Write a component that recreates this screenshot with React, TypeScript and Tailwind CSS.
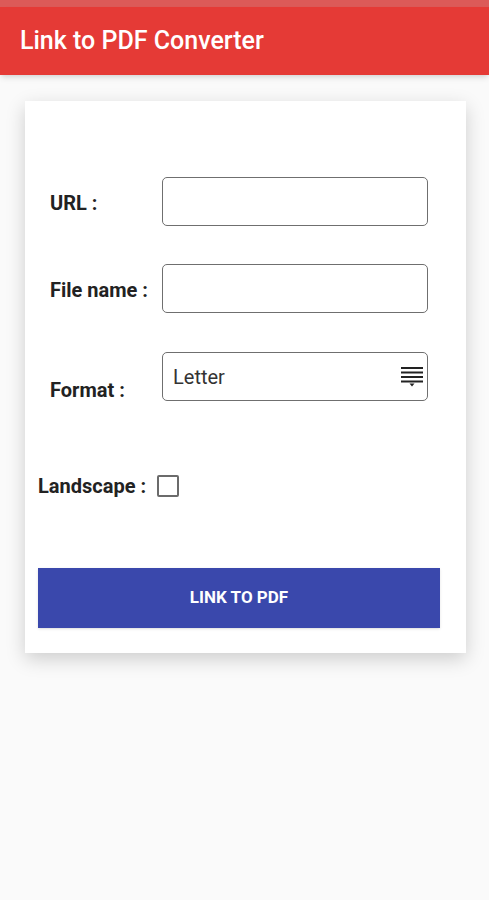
import { useState } from "react";

const font = { fontFamily: "Roboto, 'Noto Sans', sans-serif" };

function SelectIcon() {
  return (
    <svg width="24" height="22" viewBox="0 0 24 22" className="shrink-0">
      <rect x="1" y="1" width="22" height="2" fill="#222" />
      <rect x="1" y="5.5" width="22" height="2" fill="#222" />
      <rect x="1" y="10" width="22" height="2" fill="#222" />
      <rect x="1" y="14.5" width="22" height="2" fill="#222" />
      <path d="M9.5 17.5 L14.5 17.5 L12 20.5 Z" fill="#222" />
    </svg>
  );
}

function Field({ label }: { label: string }) {
  return (
    <div className="flex items-center pl-[12px] pr-[25px]">
      <span className="mt-[2px] w-[112px] shrink-0 text-[20px] font-bold text-[#222]">{label}</span>
      <input
        className="h-[49px] w-0 min-w-0 flex-1 rounded-[5px] border-[1.5px] border-[#6f6f6f] bg-white px-2 text-[20px] focus:outline-none"
        style={font}
      />
    </div>
  );
}

export default function App() {
  const [landscape, setLandscape] = useState(false);

  return (
    <div className="min-h-[900px] bg-[#fafafa]" style={font}>
      <div className="h-[7px] bg-[#dc5a58]" />
      <header className="flex h-[68px] items-center bg-[#e53a36] px-5 shadow-md">
        <h1 className="text-[25px] font-medium text-white">Link to PDF Converter</h1>
      </header>

      <div className="pl-[25px] pr-[23px] pt-[26px]">
        <div className="flex h-[552px] flex-col bg-white px-[13px] pt-[76px] shadow-[0_6px_18px_rgba(0,0,0,0.18)]">
          <Field label="URL :" />
          <div className="h-[38px]" />
          <Field label="File name :" />
          <div className="h-[39px]" />

          <div className="flex items-end pl-[12px] pr-[25px]">
            <span className="mb-[-4px] w-[112px] shrink-0 text-[20px] font-bold text-[#222]">Format :</span>
            <div className="flex h-[49px] min-w-0 flex-1 items-center justify-between rounded-[5px] border-[1.5px] border-[#6f6f6f] bg-white pl-[10px] pr-[3px]">
              <span className="text-[20px] text-[#333]">Letter</span>
              <SelectIcon />
            </div>
          </div>

          <div className="mt-[70px] flex items-center">
            <span className="text-[20px] font-bold text-[#222]">Landscape :</span>
            <button
              onClick={() => setLandscape(!landscape)}
              className="ml-[11px] flex h-[22px] w-[22px] items-center justify-center rounded-[2px] border-2 border-[#6b6b6b] bg-white"
            >
              {landscape && <span className="h-[12px] w-[12px] bg-[#3949ab]" />}
            </button>
          </div>

          <button className="mt-[67px] h-[60px] w-[402px] bg-[#3a48ac] text-[17px] font-bold text-white shadow-sm">
            LINK TO PDF
          </button>
        </div>
      </div>
    </div>
  );
}
